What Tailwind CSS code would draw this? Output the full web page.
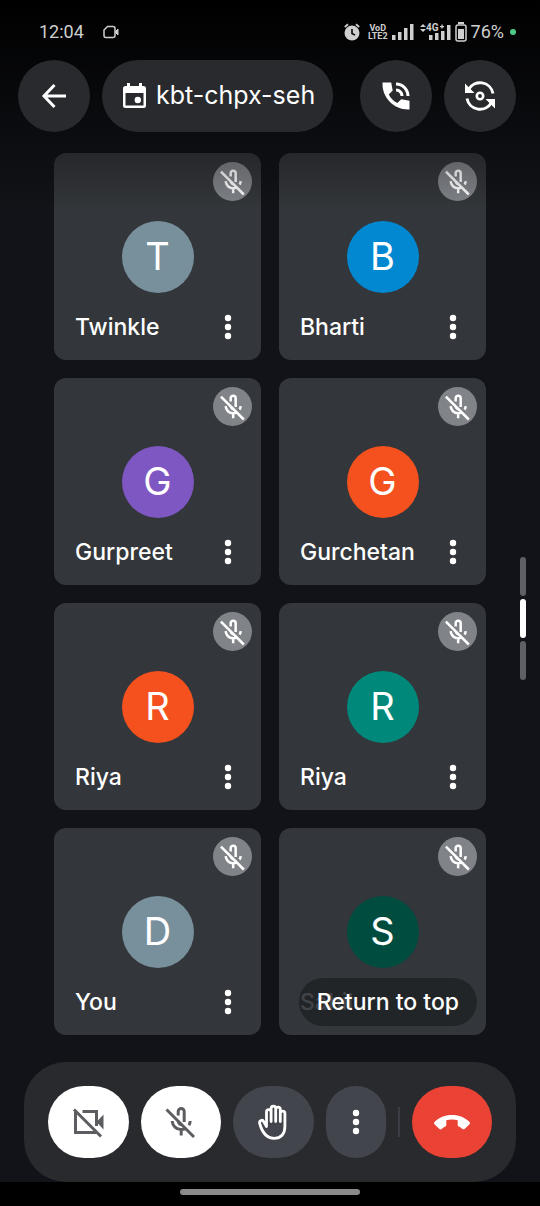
<!DOCTYPE html>
<html lang="en">
<head>
<meta charset="utf-8">
<meta name="viewport" content="width=device-width, initial-scale=1">
<title>kbt-chpx-seh</title>
<script src="https://cdn.jsdelivr.net/npm/@tailwindcss/browser@4"></script>
</head>
<body class="bg-[#111318] font-['Inter',sans-serif] text-white">
<svg class="hidden" aria-hidden="true">
  <symbol id="mic-off" viewBox="0 0 36 36"><g fill="none" stroke="currentColor" stroke-width="3"><path d="M15.200 11.500V7.500a3 3 0 0 1 6 0V18M9.200 17a9 9 0 0 0 9 8.600q2.300 0 4.300-1M27.200 17q-.1 2.200-1.200 4.200M18.200 25.500V31.500M15.200 17q.5 3.200 3.600 3.800"/><path d="M3.500 5.500L31 33"/></g></symbol>
  <symbol id="more" viewBox="0 0 8 26"><g fill="currentColor"><circle cx="4" cy="4" r="3.2"/><circle cx="4" cy="13" r="3.2"/><circle cx="4" cy="22" r="3.2"/></g></symbol>
</svg>
<div class="relative flex min-h-screen flex-col">
  <div class="pointer-events-none absolute inset-x-0 top-0 z-10 h-[210px] bg-linear-to-b from-black to-transparent"></div>

  <!-- Status bar -->
  <div class="relative z-20 flex h-15 items-center pt-1 pr-6 pl-[39px] font-['Roboto',sans-serif] text-lg text-[#cfcfcf]">
    <time>12:04</time>
    <svg class="ml-[19px] h-3.5 w-4" viewBox="0 0 16 14" fill="none" stroke="currentColor" stroke-width="1.5" aria-hidden="true"><path d="M4.500 1.500H10Q12 1.500 12 3.500V10.500Q12 12.500 10 12.500H3Q1 12.500 1 10.500V5Z"/><path d="M12 7l3-3v6z" fill="currentColor" stroke-width="1"/></svg>
    <div class="ml-auto flex items-center">
      <svg class="h-[18px] w-4" viewBox="0 0 16 18" aria-hidden="true"><circle cx="8" cy="10" r="7.500" fill="currentColor"/><path d="M.8 4 4 1.300M15.200 4 12 1.300" stroke="currentColor" stroke-width="1.800"/><path d="M8 6v4.500l3 1.600" fill="none" stroke="#030405" stroke-width="1.600"/></svg>
      <div class="ml-2 flex flex-col items-center text-[9px] leading-[8px] font-bold"><span>VoD</span><span>LTE2</span></div>
      <svg class="ml-1 h-4 w-[22px]" viewBox="0 0 22 16" fill="currentColor" aria-hidden="true"><path d="M0 11h3.500v5H0zM6 8h3.500v8H6zM12 4h3.500v12h-3.500zM18 0h3.500v16h-3.500z"/></svg>
      <svg class="ml-1.5 h-[18px] w-[31px]" viewBox="0 0 31 18" fill="currentColor" aria-hidden="true"><path d="M0 4l3-3 3 3zM0 6h6L3 9zM9 12h3.500v5H9zM15 10h3.500v7h-3.500zM21 8h3.500v9h-3.500zM27 2h3.500v15h-3.500z"/><text x="6" y="8" font-size="10" font-weight="700">4G</text><path d="M20 3h4v1.300h-4zM21.400 1.500h1.300v4h-1.300z"/></svg>
      <svg class="ml-1 h-5 w-3" viewBox="0 0 12 20" aria-hidden="true"><path d="M3 0h6v2H3zM3 7h6v10H3z" fill="currentColor"/><rect x="1" y="3" width="10" height="16" rx="2" fill="none" stroke="currentColor" stroke-width="1.500"/></svg>
    </div>
    <span class="ml-1">76%</span>
    <span class="ml-1.5 size-1.5 rounded-full bg-[#4fc98a]"></span>
  </div>

  <!-- Meeting header -->
  <header class="relative z-20 flex items-center px-[18px]">
    <button aria-label="Back" class="flex size-[72px] items-center justify-center rounded-full bg-[#282a2e]">
      <svg class="size-9" viewBox="0 0 36 36" fill="none" stroke="currentColor" stroke-width="3" aria-hidden="true"><path d="M18.500 7L8 18L18.500 29M8 18H30"/></svg>
    </button>
    <button class="ml-3 flex h-[72px] items-center gap-2 rounded-full bg-[#282a2e] px-[18px] text-[25px]">
      <svg class="h-[26px] w-7" viewBox="0 0 28 26" aria-hidden="true"><path fill="currentColor" fill-rule="evenodd" d="M7 0h3v3h9V0h3v3h1.500a2.500 2.500 0 0 1 2.500 2.500v17a2.500 2.500 0 0 1-2.500 2.500h-18a2.500 2.500 0 0 1-2.500-2.500v-17A2.500 2.500 0 0 1 5.500 3H7zM5.500 10v12.500h18V10z"/><circle cx="17.800" cy="17" r="3.200" fill="currentColor"/></svg>
      <span>kbt-chpx-seh</span>
    </button>
    <button aria-label="Switch audio to phone" class="ml-auto flex size-[72px] items-center justify-center rounded-full bg-[#282a2e]">
      <svg class="size-9" viewBox="0 0 24 24" fill="currentColor" aria-hidden="true"><path d="M21 15.200l-5.500-1-2.600 2.500c-2.500-1.300-4.400-3.200-5.700-5.700l2.600-2.600L8.800 3H3.030C2.450 13.180 10.820 21.550 21 20.970zM19 12h2c0-4.970-4.030-9-9-9v2c3.870 0 7 3.130 7 7zm-4 0h2c0-2.760-2.240-5-5-5v2c1.660 0 3 1.340 3 3z"/></svg>
    </button>
    <button aria-label="Switch camera" class="ml-3 mr-1.5 flex size-[72px] items-center justify-center rounded-full bg-[#282a2e]">
      <svg class="size-8" viewBox="0 0 32 32" fill="none" stroke="currentColor" stroke-width="2.900" aria-hidden="true"><path d="M4.500 9.500A13.200 13.200 0 0 1 29 13.500M27.500 22.500A13.200 13.200 0 0 1 3 18.500"/><circle cx="16" cy="16" r="3.200" stroke-width="2.600"/><path d="M1 3.500V13h9.500zM31 19h-9.500L31 28.500z" fill="currentColor" stroke="none"/></svg>
    </button>
  </header>

  <!-- Participants -->
  <main class="relative grow px-[54px] pt-[21px] pb-[27px]">
    <ul class="grid grid-cols-2 gap-[18px]" id="tiles"></ul>
    <div class="absolute top-[425px] right-3.5 flex flex-col gap-[3px]" aria-hidden="true">
      <span class="h-[39px] w-1.5 rounded-full bg-[#5f6065]"></span>
      <span class="h-[39px] w-1.5 rounded-full bg-white"></span>
      <span class="h-[39px] w-1.5 rounded-full bg-[#5f6065]"></span>
    </div>
    <button class="absolute right-[63px] bottom-9 h-12 rounded-full bg-[#202226]/85 px-[18px] text-[23px] font-medium">Return to top</button>
  </main>

  <!-- Call controls -->
  <div class="px-6">
    <div class="flex items-center gap-3 rounded-[42px] bg-[#282a2e] p-6">
      <button aria-label="Turn on camera" class="flex h-[72px] flex-1 items-center justify-center rounded-full bg-white text-[#5c5d60]">
        <svg class="size-9" viewBox="0 0 36 36" fill="none" stroke="currentColor" stroke-width="3" aria-hidden="true"><path d="M12.500 7.500H26.500V22M5.500 8V28.500H26"/><path d="M26.500 18l7-7.500v15z" fill="currentColor" stroke="none"/><path d="M4 5.500L31 32.500"/></svg>
      </button>
      <button aria-label="Unmute" class="flex h-[72px] flex-1 items-center justify-center rounded-full bg-white text-[#5c5d60]">
        <svg class="size-9" aria-hidden="true"><use href="#mic-off"/></svg>
      </button>
      <button aria-label="Raise hand" class="flex h-[72px] flex-1 items-center justify-center rounded-full bg-[#42464c]">
        <svg class="size-9" viewBox="0 0 36 36" fill="none" stroke="currentColor" stroke-width="2.800" stroke-linecap="round" stroke-linejoin="round" aria-hidden="true"><path d="M11.500 22V8a2.300 2.300 0 0 1 4.600 0V17.500V4.500a2.300 2.300 0 0 1 4.600 0V17.500V5.500a2.300 2.300 0 0 1 4.600 0V17.500V9.500a2.300 2.300 0 0 1 4.600 0V22.500C29.900 30 26 34.300 19 34.300C12 34.300 7.500 29.500 4.700 19.500C4 16.500 7.500 15 8.800 17.800L11.500 22.500"/></svg>
      </button>
      <button aria-label="More options" class="flex h-[72px] w-15 items-center justify-center rounded-full bg-[#42464c]">
        <svg class="h-[26px] w-2" aria-hidden="true"><use href="#more"/></svg>
      </button>
      <span class="h-[30px] w-0.5 bg-[#3a3d43]"></span>
      <button aria-label="Leave call" class="flex h-[72px] flex-1 items-center justify-center rounded-full bg-[#ea4335]">
        <svg class="h-[15px] w-9" viewBox="0 0 36 15" fill="currentColor" aria-hidden="true"><path d="M18 0C11 0 5 2.500.7 6.800a1.800 1.800 0 0 0 0 2.600l4.500 4.400a1.800 1.800 0 0 0 2.400.1c1.200-1 2.500-1.800 3.700-2.400.6-.3 1-.9 1-1.600V5.200c3.700-1 7.700-1 11.400 0v4.700c0 .7.4 1.300 1 1.600 1.300.6 2.600 1.500 3.700 2.400.7.600 1.700.6 2.400-.1l4.500-4.400a1.800 1.800 0 0 0 0-2.600C31 2.500 25 0 18 0z"/></svg>
      </button>
    </div>
  </div>
  <div class="flex h-6 justify-center bg-black pt-[7px]"><span class="h-1.5 w-1/3 rounded-full bg-[#8a8b8b]"></span></div>
</div>

<template id="tile">
  <li class="relative flex aspect-square flex-col justify-end rounded-xl bg-[#33363a]">
    <span class="absolute top-[9px] right-[9px] flex size-[39px] items-center justify-center rounded-full bg-[#808388]"><svg class="size-[30px]" aria-hidden="true"><use href="#mic-off"/></svg></span>
    <span data-avatar class="absolute inset-0 m-auto flex size-[72px] items-center justify-center rounded-full text-[38px]"></span>
    <div class="flex h-[66px] items-center justify-between px-[21px]">
      <span data-name class="text-[23px] font-medium"></span>
      <button aria-label="Participant options" class="flex h-10 w-6 items-center justify-center"><svg class="h-[26px] w-2" aria-hidden="true"><use href="#more"/></svg></button>
    </div>
  </li>
</template>
<script>
  const people = [
    { name: 'Twinkle', color: '#78909c' }, { name: 'Bharti', color: '#0288d1' },
    { name: 'Gurpreet', color: '#7e57c2' }, { name: 'Gurchetan', color: '#f4511e' },
    { name: 'Riya', color: '#f4511e' }, { name: 'Riya', color: '#00897b' },
    { name: 'You', color: '#78909c', initial: 'D' }, { name: 'Sahil', color: '#004d40', noMenu: true },
  ];
  const list = document.getElementById('tiles');
  for (const { name, color, initial, noMenu } of people) {
    const tile = document.getElementById('tile').content.cloneNode(true);
    const avatar = tile.querySelector('[data-avatar]');
    avatar.textContent = initial || name[0];
    avatar.style.backgroundColor = color;
    tile.querySelector('[data-name]').textContent = name;
    if (noMenu) tile.querySelector('button').remove();
    list.append(tile);
  }
</script>
</body>
</html>
